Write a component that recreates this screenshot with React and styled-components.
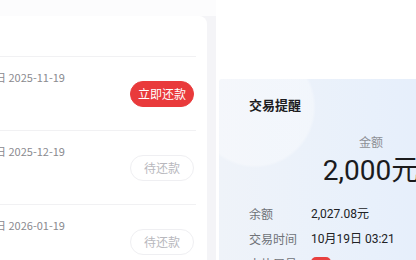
import React from 'react';
import styled, { createGlobalStyle } from 'styled-components';

const Global = createGlobalStyle`
  html, body { margin: 0; padding: 0; background: #ffffff; }
  body {
    width: 416px;
    height: 260px;
    overflow: hidden;
    font-family: "Noto Sans CJK SC", "Noto Sans", Roboto, sans-serif;
  }
`

const Page = styled.div`
  display: flex;
  width: 416px;
  height: 260px;
  overflow: hidden;
`

const LeftPanel = styled.div`
  width: 216px;
  flex-shrink: 0;
  display: flex;
  flex-direction: column;
  background: #f4f4f7;
  overflow: hidden;
`

const TopBar = styled.div`
  height: 16px;
  flex-shrink: 0;
  background: #fcfcfd;
`

const Card = styled.div`
  width: 240px;
  margin-left: -33px;
  flex: 1;
  background: #ffffff;
  border-top-right-radius: 8px;
  padding-left: 6px;
  box-sizing: border-box;
`

const CardHead = styled.div`
  height: 40px;
  margin-right: 11px;
  border-bottom: 1px solid #f1f1f3;
`

const Row = styled.div`
  height: 73px;
  display: flex;
  align-items: center;
  justify-content: space-between;
  margin-right: 11px;
  border-bottom: 1px solid #f1f1f3;
`

const Info = styled.div`
  align-self: flex-start;
  padding-top: 12px;
`

const DueDate = styled.div`
  font-size: 11px;
  line-height: 16px;
  color: #8a8a8f;
  white-space: nowrap;
`

const PayButton = styled.button`
  width: 64px;
  height: 26px;
  margin-right: 2px;
  border-radius: 13px;
  font-family: inherit;
  font-size: 12px;
  padding: 0;
  border: 1px solid ${props => props.primary ? '#e93a3b' : '#efeff2'};
  background: ${props => props.primary ? '#e93a3b' : '#ffffff'};
  color: ${props => props.primary ? '#ffffff' : '#b8b8bd'};
`

const RightPanel = styled.div`
  flex: 1;
  padding: 79px 0 0 3px;
  background: #ffffff;
  overflow: hidden;
`

const Notice = styled.div`
  width: 304px;
  height: 200px;
  border-top-left-radius: 3px;
  padding: 17px 0 0 30px;
  box-sizing: border-box;
  background:
    radial-gradient(circle at 36px 28px, rgba(255,255,255,0.35) 0 58px, rgba(255,255,255,0) 61px),
    linear-gradient(90deg, #eff3f9 0%, #e8f0fb 50%, #e2ecfb 100%);
`

const NoticeTitle = styled.div`
  font-size: 13px;
  font-weight: 600;
  line-height: 18px;
  color: #1d1d1f;
`

const AmountBlock = styled.div`
  display: flex;
  flex-direction: column;
  align-items: center;
  margin: 20px 0 0 -30px;
`

const AmountLabel = styled.div`
  font-size: 12px;
  line-height: 16px;
  color: #8d8f95;
`

const Amount = styled.div`
  margin-top: 4px;
  font-family: Roboto, "Noto Sans CJK SC", sans-serif;
  font-size: 28px;
  font-weight: 400;
  line-height: 34px;
  color: #1b1b1d;
`

const Details = styled.div`
  margin-top: 18px;
  display: flex;
  flex-direction: column;
  gap: 9px;
`

const DetailRow = styled.div`
  display: flex;
  font-size: 12px;
  line-height: 16px;
`

const DetailLabel = styled.span`
  width: 62px;
  color: #6f7278;
`

const DetailValue = styled.span`
  color: #202124;
  font-family: Roboto, "Noto Sans CJK SC", sans-serif;
`

const Redact = styled.span`
  display: inline-block;
  width: 20px;
  height: 10px;
  margin-top: 1px;
  border-radius: 5px;
  background: #e8403f;
`

const rows = [
  { date: '2025-11-19', primary: true, label: '立即还款' },
  { date: '2025-12-19', primary: false, label: '待还款' },
  { date: '2026-01-19', primary: false, label: '待还款' },
];

const App = () => {
  return (
    <>
      <Global />
      <Page>
        <LeftPanel>
          <TopBar />
          <Card>
            <CardHead />
            {rows.map(r => (
              <Row key={r.date}>
                <Info>
                  <DueDate>还款日 {r.date}</DueDate>
                </Info>
                <PayButton primary={r.primary}>{r.label}</PayButton>
              </Row>
            ))}
          </Card>
        </LeftPanel>
        <RightPanel>
          <Notice>
            <NoticeTitle>交易提醒</NoticeTitle>
            <AmountBlock>
              <AmountLabel>金额</AmountLabel>
              <Amount>2,000元</Amount>
            </AmountBlock>
            <Details>
              <DetailRow>
                <DetailLabel>余额</DetailLabel>
                <DetailValue>2,027.08元</DetailValue>
              </DetailRow>
              <DetailRow>
                <DetailLabel>交易时间</DetailLabel>
                <DetailValue>10月19日 03:21</DetailValue>
              </DetailRow>
              <DetailRow>
                <DetailLabel>卡片尾号</DetailLabel>
                <Redact />
              </DetailRow>
            </Details>
          </Notice>
        </RightPanel>
      </Page>
    </>
  );
};

export default App;
